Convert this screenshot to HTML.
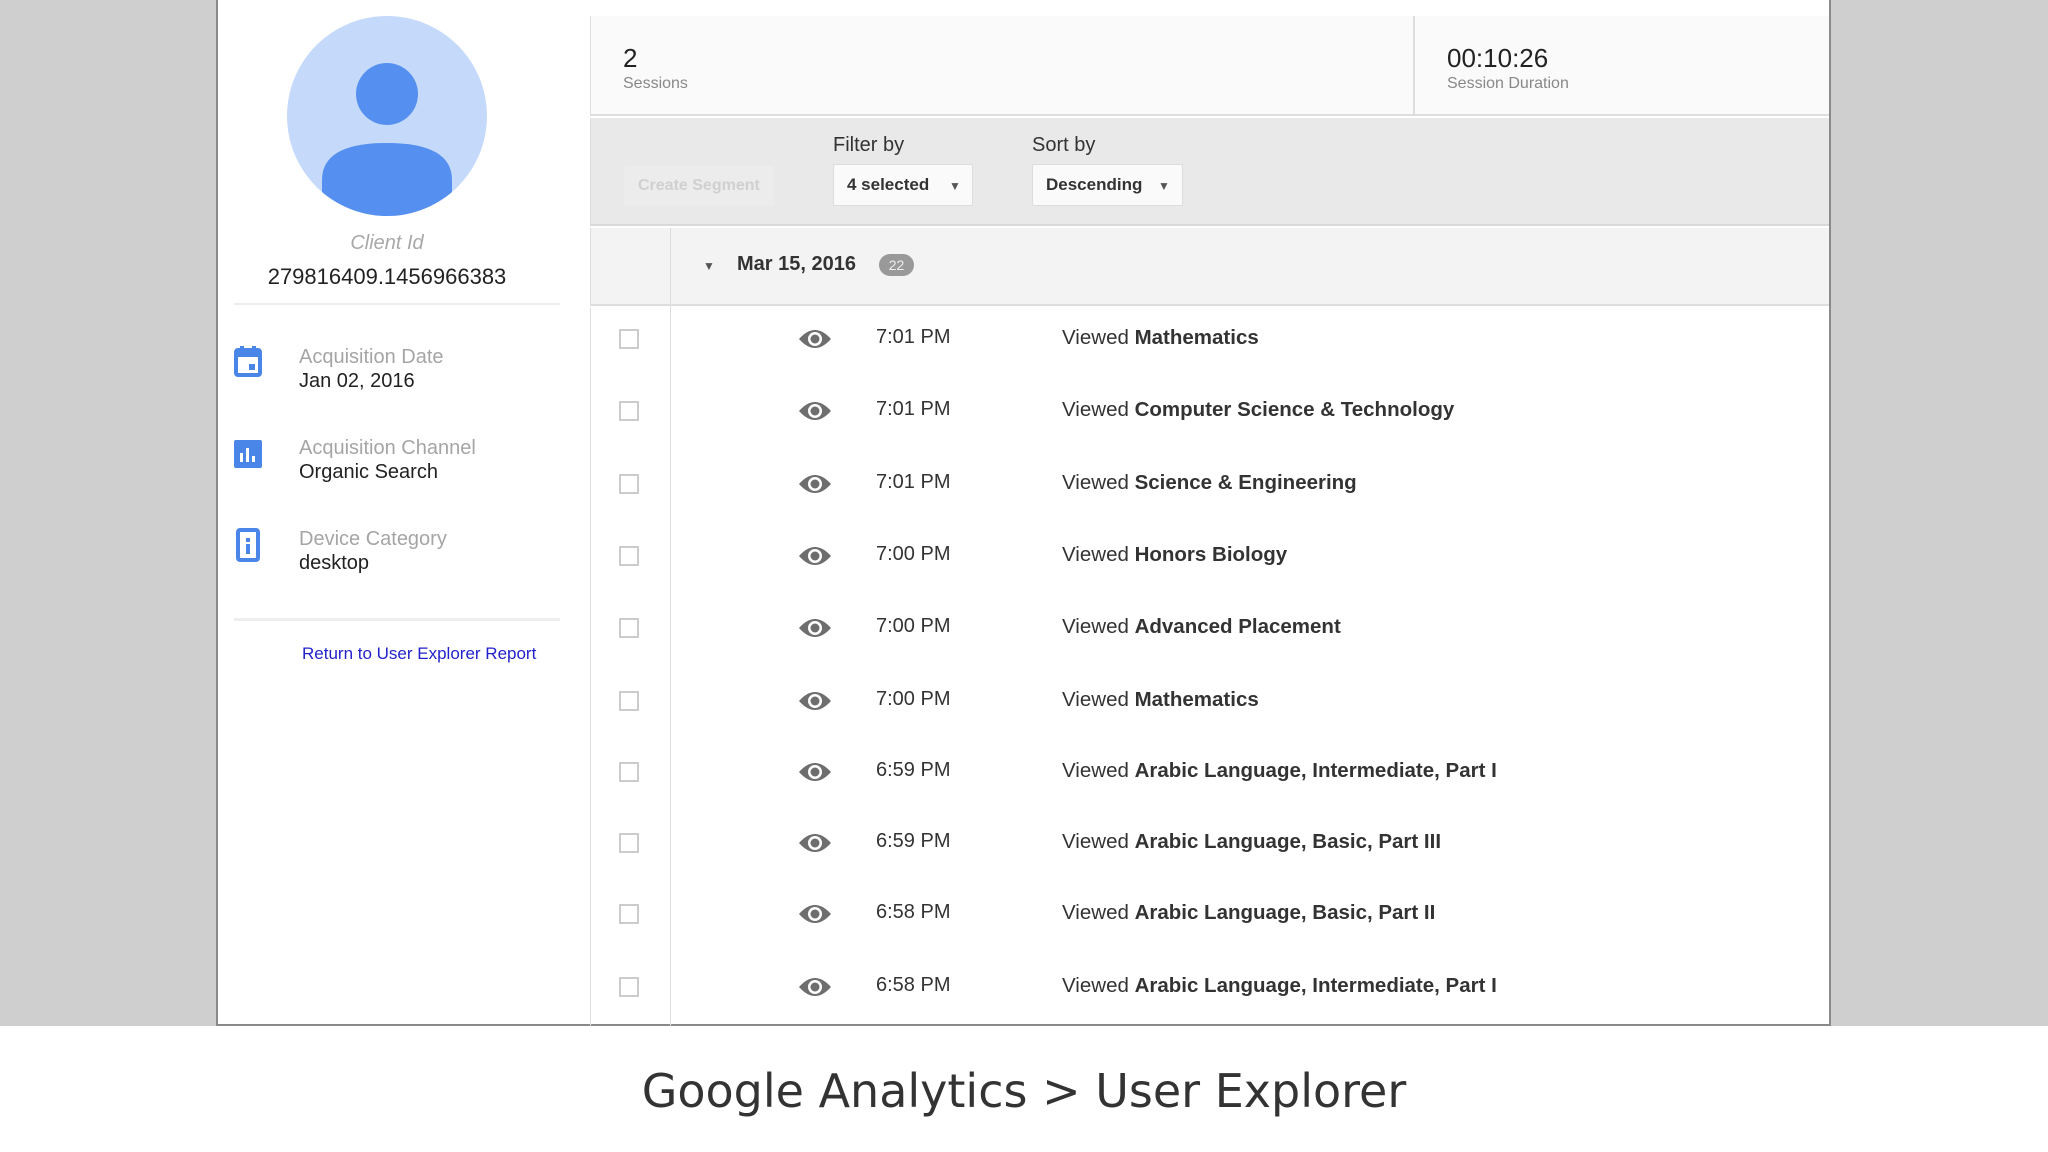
<!DOCTYPE html>
<html><head><meta charset="utf-8"><style>
*{margin:0;padding:0;box-sizing:border-box}
body{width:2048px;height:1152px;background:#fff;font-family:"Liberation Sans",Arial,sans-serif;position:relative;overflow:hidden}
.abs{position:absolute}
.t{position:absolute;white-space:nowrap}
</style></head><body>
<div class="abs" style="left:0;top:0;width:218px;height:1026px;background:#cfcfcf"></div>
<div class="abs" style="left:1829px;top:0;width:219px;height:1026px;background:#cfcfcf"></div>
<div class="abs" style="left:216px;top:0;width:1615px;height:1026px;border:2px solid #8a8a8a;border-top:none;background:#fff"></div>
<!-- left column -->
<svg class="abs" style="left:286px;top:15px" width="202" height="202" viewBox="0 0 202 202">
<defs><clipPath id="c"><circle cx="101" cy="101" r="100"/></clipPath></defs>
<circle cx="101" cy="101" r="100" fill="#c5d9fb"/>
<circle cx="101" cy="79" r="31" fill="#5590f0"/>
<path d="M36 202 L36 165 Q36 128 101 128 Q166 128 166 165 L166 202Z" fill="#5590f0" clip-path="url(#c)"/>
</svg>
<div class="t" style="left:287px;width:200px;text-align:center;top:232px;font-size:20px;color:#a8a8a8;font-style:italic">Client Id</div>
<div class="t" style="left:227px;width:320px;text-align:center;top:264px;font-size:22px;color:#222">279816409.1456966383</div>
<div class="abs" style="left:234px;top:303px;width:326px;height:2px;background:#eee"></div>
<svg class="abs" style="left:234px;top:345px" width="28" height="32" viewBox="0 0 28 32"><rect x="2" y="5" width="24" height="25" rx="2" fill="none" stroke="#4a86e8" stroke-width="4"/><rect x="2" y="5" width="24" height="7" fill="#4a86e8"/><rect x="6" y="1" width="4" height="6" fill="#4a86e8"/><rect x="18" y="1" width="4" height="6" fill="#4a86e8"/><rect x="15" y="19" width="6" height="6" fill="#4a86e8"/></svg>
<svg class="abs" style="left:234px;top:440px" width="28" height="28" viewBox="0 0 28 28"><rect width="28" height="28" rx="2" fill="#4a86e8"/><rect x="6" y="13" width="3" height="9" fill="#fff"/><rect x="12" y="8" width="3" height="14" fill="#fff"/><rect x="18" y="16" width="3" height="6" fill="#fff"/></svg>
<svg class="abs" style="left:236px;top:528px" width="24" height="34" viewBox="0 0 24 34"><rect x="2" y="2" width="20" height="30" rx="2" fill="none" stroke="#4a86e8" stroke-width="4"/><rect x="10" y="10" width="4" height="4" fill="#4a86e8"/><rect x="10" y="16" width="4" height="10" fill="#4a86e8"/></svg>
<div class="t" style="left:299px;top:346px;font-size:20px;color:#a5a5a5">Acquisition Date</div>
<div class="t" style="left:299px;top:370px;font-size:20px;color:#222">Jan 02, 2016</div>
<div class="t" style="left:299px;top:437px;font-size:20px;color:#a5a5a5">Acquisition Channel</div>
<div class="t" style="left:299px;top:461px;font-size:20px;color:#222">Organic Search</div>
<div class="t" style="left:299px;top:528px;font-size:20px;color:#a5a5a5">Device Category</div>
<div class="t" style="left:299px;top:552px;font-size:20px;color:#222">desktop</div>
<div class="abs" style="left:234px;top:618px;width:326px;height:3px;background:#eee"></div>
<div class="t" style="left:302px;top:644px;font-size:17px;color:#2222cc">Return to User Explorer Report</div>
<!-- right -->
<div class="abs" style="left:590px;top:16px;width:1239px;height:100px;background:#fafafa;border-left:1px solid #ddd;border-bottom:2px solid #ddd"></div>
<div class="abs" style="left:1413px;top:16px;width:2px;height:100px;background:#ddd"></div>
<div class="t" style="left:623px;top:43px;font-size:26px;color:#222">2</div>
<div class="t" style="left:623px;top:75px;font-size:16px;color:#888">Sessions</div>
<div class="t" style="left:1447px;top:43px;font-size:26px;color:#222">00:10:26</div>
<div class="t" style="left:1447px;top:75px;font-size:16px;color:#888">Session Duration</div>
<div class="abs" style="left:590px;top:118px;width:1239px;height:108px;background:#e9e9e9;border-left:1px solid #ddd;border-bottom:2px solid #d8d8d8"></div>
<div class="abs" style="left:624px;top:166px;width:150px;height:40px;background:#ececec;border-radius:2px"></div>
<div class="t" style="left:638px;top:177px;font-size:16px;color:#d0d0d0;font-weight:bold">Create Segment</div>
<div class="t" style="left:833px;top:134px;font-size:20px;color:#333">Filter by</div>
<div class="t" style="left:1032px;top:134px;font-size:20px;color:#333">Sort by</div>
<div class="abs" style="left:833px;top:164px;width:140px;height:42px;background:#fafafa;border:1px solid #ddd;border-radius:2px"></div>
<div class="t" style="left:847px;top:175px;font-size:17px;color:#333;font-weight:bold">4 selected</div>
<div class="t" style="left:949px;top:179px;font-size:12px;color:#555">▼</div>
<div class="abs" style="left:1032px;top:164px;width:151px;height:42px;background:#fafafa;border:1px solid #ddd;border-radius:2px"></div>
<div class="t" style="left:1046px;top:175px;font-size:17px;color:#333;font-weight:bold">Descending</div>
<div class="t" style="left:1158px;top:179px;font-size:12px;color:#555">▼</div>
<div class="abs" style="left:590px;top:228px;width:1239px;height:78px;background:#f3f3f3;border-left:1px solid #ddd;border-bottom:2px solid #ddd"></div>
<div class="abs" style="left:670px;top:228px;width:1px;height:798px;background:#ddd"></div>
<div class="t" style="left:703px;top:259px;font-size:12px;color:#555">▼</div>
<div class="t" style="left:737px;top:253px;font-size:20px;color:#333;font-weight:bold">Mar 15, 2016</div>
<div class="abs" style="left:879px;top:254px;width:35px;height:22px;border-radius:11px;background:#999;color:#eee;font-size:14px;text-align:center;line-height:22px">22</div>
<div class="abs" style="left:590px;top:308px;width:1px;height:718px;background:#ddd"></div>
<div id="rows"></div>
<div class="t" style="left:0;width:2048px;text-align:center;top:1064px;font-size:46px;color:#333;font-family:'DejaVu Sans',sans-serif">Google Analytics &gt; User Explorer</div>
<script>
var d=[[338,"7:01 PM","Mathematics"],[410,"7:01 PM","Computer Science &amp; Technology"],[483,"7:01 PM","Science &amp; Engineering"],[555,"7:00 PM","Honors Biology"],[627,"7:00 PM","Advanced Placement"],[700,"7:00 PM","Mathematics"],[771,"6:59 PM","Arabic Language, Intermediate, Part I"],[842,"6:59 PM","Arabic Language, Basic, Part III"],[913,"6:58 PM","Arabic Language, Basic, Part II"],[986,"6:58 PM","Arabic Language, Intermediate, Part I"]];
var h="";d.forEach(function(r){var y=r[0];
h+='<div class="abs" style="left:619px;top:'+(y-9)+'px;width:20px;height:20px;border:2px solid #ccc;background:#fff"></div>';
h+='<svg class="abs" style="left:798px;top:'+(y-11)+'px" width="34" height="24" viewBox="0 0 34 24"><path d="M1 12 Q17 -6 33 12 Q17 30 1 12Z" fill="#6e6e6e"/><circle cx="17" cy="12" r="7" fill="#fff"/><circle cx="17" cy="12" r="4.5" fill="#6e6e6e"/></svg>';
h+='<div class="t" style="left:876px;top:'+(y-12)+'px;font-size:20px;color:#333">'+r[1]+'</div>';
h+='<div class="t" style="left:1062px;top:'+(y-12)+'px;font-size:20.5px;color:#333">Viewed <b>'+r[2]+'</b></div>';});
document.getElementById("rows").innerHTML=h;
</script>
</body></html>
